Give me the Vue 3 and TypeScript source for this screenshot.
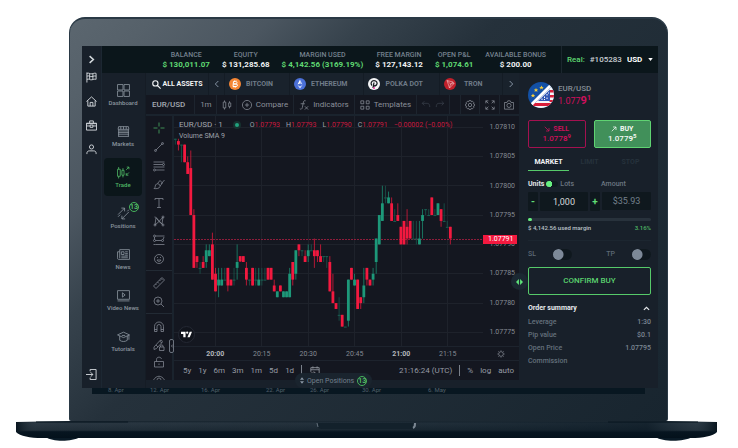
<script setup lang="ts">
import { ref } from 'vue'

interface Stat { label: string; value: string; up?: boolean }
interface Item { label: string; icon: string; badge?: number; active?: boolean }
type Candle = [open: number, high: number, low: number, close: number]

const stats: Stat[] = [
  { label: 'BALANCE', value: '$ 130,011.07', up: true },
  { label: 'EQUITY', value: '$ 131,285.68' },
  { label: 'MARGIN USED', value: '$ 4,142.56 (3169.19%)', up: true },
  { label: 'FREE MARGIN', value: '$ 127,143.12' },
  { label: 'OPEN P&L', value: '$ 1,074.61', up: true },
  { label: 'AVAILABLE BONUS', value: '$ 200.00' },
]

// All rail, navigation and tool glyphs are stroked on a 24 x 24 grid.
const rail: Item[] = [
  { label: 'Markets flag', icon: 'M2 1v22M2 3c4-2 7 2 11 1s6-2 9-1v13c-3-1-5 0-9 1s-7-3-11-1M2 9c4-2 7 2 11 1s6-2 9-1M8 3v13M15 4v12' },
  { label: 'Home', icon: 'M1 12 12 2l11 10M4 10v12h16V10M9 22v-8h6v8' },
  { label: 'Portfolio', icon: 'M1 7h22v15H1zM8 7V2h8v5M1 13h8m6 0h8M9 11h6v5H9zM1 8h22' },
  { label: 'Profile', icon: 'M12 2a4.500 4.500 0 1 0 0 9 4.500 4.500 0 0 0 0-9M2 22v-2c0-3 2-5 5-5h10c3 0 5 2 5 5v2' },
]

const nav: Item[] = [
  { label: 'Dashboard', icon: 'M1 1h10v10H1zM13 1h10v10H13zM1 13h10v10H1zM13 13h10v10H13z' },
  { label: 'Markets', icon: 'M3 3h18l1 5H2zM7 3v5M12 3v5M17 3v5M3 11h18M2 14h20M2 17h20M2 21h20M3 8v13M21 8v13' },
  { label: 'Trade', icon: 'M3 2v4M1 6h5v13H1zM3 19v4M11 4v4M9 8h4v9H9zM11 17v4M17 7l5-5M18 2h4v4M22 12l-5 5M17 13v4h4', active: true },
  { label: 'Positions', icon: 'M2 14 14 2M8 2h6v6M22 9 9 22M9 16v6h6M2 18l4-4M19 8l3-3', badge: 13 },
  { label: 'News', icon: 'M5 3h18v18H3c-2 0-2-1-2-3V7h4M5 3v16M8 7h5v5H8zM15 7h5M15 10h5M15 13h5M8 15h12M8 18h12' },
  { label: 'Video News', icon: 'M1 3h22v16H1zM10 7v8l5-4zM1 22h22' },
  { label: 'Tutorials', icon: 'M1 9l11-5 11 5-11 5zM5 11v8c4 3 10 3 14 0v-8M22 9v9M9 10h6' },
]

const toolGroups: string[][] = [
  [
    'M12 1v8M12 15v8M1 12h8M15 12h8',
    'M5 19 19 5M3 19a2 2 0 1 0 4 0 2 2 0 0 0-4 0M17 5a2 2 0 1 0 4 0 2 2 0 0 0-4 0',
    'M1 4h22M1 9h18M1 14h22M5 20h18M1 20a2 2 0 1 0 4 0 2 2 0 0 0-4 0M19 9a2 2 0 1 0 4 0 2 2 0 0 0-4 0',
    'M2 21c4-2 1-7 5-9 3-2 8 1 7 5s-7 5-12 4M9 11l5-6 5 5-5 6M16 12l7-8',
    'M4 6V3h16v3M12 3v18M8 21h8',
    'M4 20 6 5l12 13L20 4M6 5l6 8 8-9M4 20l8-7 8 7M4 3v2M2 20a2 2 0 1 0 4 0 2 2 0 0 0-4 0M18 20a2 2 0 1 0 4 0 2 2 0 0 0-4 0M18 4a2 2 0 1 0 4 0 2 2 0 0 0-4 0',
    'M5 4h18M5 13h12M5 21h18M1 4a2 2 0 1 0 4 0 2 2 0 0 0-4 0M1 13a2 2 0 1 0 4 0 2 2 0 0 0-4 0M17 13a2 2 0 1 0 4 0 2 2 0 0 0-4 0M3 6v5M1 21h4M20 11l2-5',
    'M3 12a9 9 0 1 0 18 0 9 9 0 0 0-18 0M8 14c2 4 6 4 8 0zM9 8v2M15 8v2',
  ],
  [
    'M1 18 18 1l5 5L6 23zM5 14l2 2M9 10l3 3M13 6l2 2M16 3l3 3',
    'M2 10a8 8 0 1 0 16 0 8 8 0 0 0-16 0M16 16l6 6M10 6v8M6 10h8',
  ],
  [
    'M3 21V11a9 9 0 0 1 18 0v10h-5V11a4 4 0 0 0-8 0v10zM3 17h5M16 17h5',
    'M2 16 14 3c3-2 6 1 4 4L7 19l-5 2zM6 12l4 4M13 4l5 4M13 16h9v7h-9zM15 16v-2c0-3 5-3 5 0v2',
    'M3 11h18v11H3zM7 11V7c0-6 9-6 10-1M12 15v3',
    'M1 12c6-10 16-10 22 0-6 9-16 9-22 0M8 12a4 4 0 1 0 8 0 4 4 0 0 0-8 0',
  ],
]

const prices = ['1.07810', '1.07805', '1.07800', '1.07795', '1.07790', '1.07785', '1.07780', '1.07775']
const times = ['20:00', '20:15', '20:30', '20:45', '21:00', '21:15']
const ranges = ['5y', '1y', '6m', '3m', '1m', '5d', '1d']
const dates = ['8. Apr', '12. Apr', '16. Apr', '22. Apr', '26. Apr', '30. Apr', '6. May']

// Values are hundred-thousandths above or below 1.07800.
const candles: Candle[] = [
  [8, 8, 7, 8], [7.6, 8, 6, 7], [7, 7, 4, 7], [7, 7, 4, 4], [4, 5, 2, 2], [3, 6, -5, -5],
  [-5, -4, -14, -14], [-12, -12, -14, -13], [-14, -13, -15, -14], [-13, -12, -14, -14], [-13, -10, -14, -11], [-12, -10, -12, -11],
  [-10, -8, -16, -16], [-15, -14, -18, -18], [-17, -14, -19, -16], [-17, -14, -17, -16], [-16, -14, -16, -16], [-14, -14, -18, -17],
  [-16, -16, -17, -17], [-16, -14, -17, -16], [-14, -10, -16, -13], [-12, -12, -13, -12.9], [-12, -12, -13, -13], [-14, -13, -17, -16],
  [-16, -16, -17, -16], [-14, -14, -17, -17], [-16, -14, -17, -16], [-17, -14, -17, -16], [-16, -14, -17, -16], [-16, -14, -16, -16],
  [-14, -14, -16, -16], [-14, -14, -16, -16], [-17, -16, -18, -18], [-19, -18, -19, -18], [-17, -17, -18, -18], [-19, -18, -19, -18],
  [-19, -18, -19, -18], [-19, -14, -19, -15], [-13, -13, -17, -16], [-15, -11, -16, -11], [-10, -10, -12, -11], [-11, -11, -12, -11],
  [-12, -11, -13, -13], [-12, -10, -13, -11], [-11, -10, -11, -11], [-11, -9, -14, -12], [-11, -11, -13, -12], [-12, -10, -13, -13],
  [-12, -12, -13, -12], [-12, -12, -14, -12], [-13, -12, -18, -18], [-18, -15, -20, -20], [-20, -20, -21, -21], [-22, -19, -23, -22],
  [-22, -22, -24, -24], [-24, -24, -24, -24], [-23, -16, -24, -16], [-14, -14, -16, -16], [-17, -15, -17, -16], [-16, -16, -21, -21],
  [-19, -19, -21, -20], [-19, -14, -20, -17], [-14, -14, -17, -16], [-16, -16, -17, -17], [-16, -14, -17, -15], [-13, -9, -15, -9],
  [-10, -5, -10, -5], [-6, 0, -6, -3], [-2, 0, -3, -2], [-3, -1, -3, -2], [-3, -2, -6, -6], [-6, -4, -6, -6],
  [-5, -3, -6, -6], [-7, -7, -10, -10], [-6, -6, -10, -10], [-7, -4, -10, -9], [-6, -6, -9, -9], [-9, -6, -9, -9],
  [-9, -6, -10, -9], [-10, -6, -10, -9], [-6, -4, -9, -5], [-4, -4, -5, -4], [-5, -4, -5, -5], [-2, -2, -5, -5],
  [-5, -4, -5, -5], [-5, -3, -5, -3], [-4, -4, -7, -6], [-6, -3, -6, -6], [-7, -6, -7, -7], [-7, -7, -10, -9],
]
const yOf = (v: number): number => 11 + (10 - v) * 5.87
const xOf = (i: number): number => 1.33 + i * 3.09
const kind = (c: Candle): string => (c[3] < c[0] ? 'down' : c[3] > c[0] ? 'up' : 'flat')

const units = ref('1,000')
const amount = ref('$35.93')
const lots = ref(false)
const stopLoss = ref(false)
const takeProfit = ref(false)
const marginPercent = 3.16
const summary = [
  ['Leverage', '1:30'],
  ['Pip value', '$0.1'],
  ['Open Price', '1.07795'],
  ['Commission', ''],
]
</script>

<template>
  <div class="laptop">
    <div class="lid">
      <div class="screen">
        <aside class="rail">
          <button class="rail-toggle" aria-label="Expand">
            <svg class="ico chev" viewBox="0 0 24 24"><path d="M7 3l10 9-10 9" /></svg>
          </button>
          <button v-for="r in rail" :key="r.label" class="rail-btn" :aria-label="r.label">
            <svg class="ico" viewBox="0 0 24 24"><path :d="r.icon" /></svg>
          </button>
          <button class="rail-btn exit" aria-label="Log out">
            <svg class="ico" viewBox="0 0 24 24"><path d="M9 5V1h13v22H9v-4M0 12h15M10 7l5 5-5 5" /></svg>
          </button>
        </aside>

        <div class="main">
          <header class="top">
            <div class="stats">
              <div v-for="s in stats" :key="s.label" class="stat">
                <span class="stat-label">{{ s.label }}</span>
                <span class="stat-value" :class="{ green: s.up }">{{ s.value }}</span>
              </div>
            </div>
            <div class="account">
              <span class="real">Real:</span>
              <label class="acc-id" for="currency">#105283</label>
              <span class="currency">
                <select id="currency"><option>USD</option></select>
                <svg class="caret" viewBox="0 0 6 4"><path d="M0 0h6L3 4z" /></svg>
              </span>
            </div>
          </header>

          <div class="work">
            <nav class="nav">
              <a v-for="n in nav" :key="n.label" href="#" class="nav-item" :class="{ active: n.active }">
                <svg class="ico nav-ico" viewBox="0 0 24 24"><path :d="n.icon" /></svg>
                <span>{{ n.label }}</span>
                <b v-if="n.badge" class="badge nav-badge">{{ n.badge }}</b>
              </a>
            </nav>

            <section class="center">
              <div class="assets">
                <button class="all">
                  <svg class="ico" viewBox="0 0 24 24"><path d="M2 9a7 7 0 1 0 14 0 7 7 0 0 0-14 0M14 14l9 9" /></svg>
                  ALL ASSETS
                </button>
                <button class="arrow" aria-label="Previous"><svg class="ico" viewBox="0 0 24 24"><path d="M16 3 7 12l9 9" /></svg></button>
                <button class="asset">
                  <svg class="coin" viewBox="0 0 24 24"><circle cx="12" cy="12" r="12" fill="#f58634" /><path d="M9 7h4c4 0 4 5 0 5H9m0 0h5c4 0 4 5 0 5H8M9 7 8 17M11 5v2m3-2v2m-4 10v2m3-2v2" fill="none" stroke="#fff" stroke-width="2" /></svg>
                  BITCOIN
                </button>
                <button class="asset">
                  <svg class="coin" viewBox="0 0 24 24"><circle cx="12" cy="12" r="12" fill="#4b70d8" /><path d="M12 3v8l-5 2z" fill="#fff" /><path d="M12 3v8l5 2z" fill="#c4d1f6" /><path d="M7 14l5 3 5-3-5 7z" fill="#e4eafb" /></svg>
                  ETHEREUM
                </button>
                <button class="asset">
                  <svg class="coin" viewBox="0 0 24 24"><circle cx="12" cy="12" r="12" fill="#f4f5f6" /><path d="M8 15c-4-4-1-10 4-10s8 5 5 9c-2 2-4 2-6 2M12 9l-2 11" fill="none" stroke="#15191f" stroke-width="2.500" /><circle cx="12" cy="20" r="2" fill="#e6399b" /></svg>
                  POLKA DOT
                </button>
                <button class="asset last">
                  <svg class="coin" viewBox="0 0 24 24"><circle cx="12" cy="12" r="12" fill="#c1202b" /><path d="M6 5l12 3 2 3-9 9zM6 5l7 7 7-1M13 12l-2 8M13 12l5-4" fill="none" stroke="#f3c5c8" stroke-width="1.200" /></svg>
                  TRON
                </button>
                <button class="arrow next" aria-label="Next"><svg class="ico" viewBox="0 0 24 24"><path d="M8 3l9 9-9 9" /></svg></button>
              </div>

              <div class="toolbar">
                <button class="cell symbol">EUR/USD</button>
                <button class="cell frame">1m</button>
                <button class="cell square" aria-label="Candles"><svg class="ico" viewBox="0 0 24 24"><path d="M6 1v4M3 5h6v14H3zM6 19v4M18 3v4M16 7h5v9h-5zM18 16v4" /></svg></button>
                <button class="cell">
                  <svg class="ico" viewBox="0 0 24 24"><path d="M1 12a11 11 0 1 0 22 0 11 11 0 0 0-22 0M12 7v10M7 12h10" /></svg>Compare
                </button>
                <button class="cell">
                  <svg class="ico" viewBox="0 0 24 24"><path d="M16 2c-4-2-5 1-6 6L8 18c-1 4-3 5-6 3M4 9h10M14 15l8 8M22 15l-8 8" /></svg>Indicators
                </button>
                <button class="cell">
                  <svg class="ico" viewBox="0 0 24 24"><path d="M2 2h7v7H2zM15 2h7v7h-7zM2 15h7v7H2zM15 15h7v7h-7z" /></svg>Templates
                </button>
                <div class="cell history">
                  <button aria-label="Undo"><svg class="ico" viewBox="0 0 24 24"><path d="M8 3 3 8l5 5M3 8h12c4 0 6 3 6 9" /></svg></button>
                  <button aria-label="Redo"><svg class="ico" viewBox="0 0 24 24"><path d="M16 3l5 5-5 5M21 8H9c-4 0-6 3-6 9" /></svg></button>
                </div>
                <span class="cell spacer"></span>
                <button class="cell square" aria-label="Settings"><svg class="ico" viewBox="0 0 24 24"><path d="M10 1h4l1 3 3-1 3 3-1 3 3 1v4l-3 1 1 3-3 3-3-1-1 3h-4l-1-3-3 1-3-3 1-3-3-1v-4l3-1-1-3 3-3 3 1zM8 12a4 4 0 1 0 8 0 4 4 0 0 0-8 0" /></svg></button>
                <button class="cell square" aria-label="Full screen"><svg class="ico" viewBox="0 0 24 24"><path d="M2 8V2h6M2 2l6 6M16 2h6v6M22 2l-6 6M2 16v6h6M2 22l6-6M22 16v6h-6M22 22l-6-6" /></svg></button>
                <button class="cell square" aria-label="Snapshot"><svg class="ico" viewBox="0 0 24 24"><path d="M1 6h6l2-4h6l2 4h6v16H1zM7 13a5 5 0 1 0 10 0 5 5 0 0 0-10 0" /></svg></button>
              </div>

              <div class="chart-row">
                <div class="tools">
                  <div v-for="(g, gi) in toolGroups" :key="gi" class="tool-group">
                    <button v-for="(t, ti) in g" :key="ti" class="tool" :class="{ cross: gi === 0 && ti === 0 }" aria-label="Drawing tool">
                      <svg class="ico" viewBox="0 0 24 24"><path :d="t" /></svg>
                    </button>
                  </div>
                </div>
                <button class="collapse" aria-label="Hide tools"><svg class="ico" viewBox="0 0 24 24"><path d="M16 6l-8 6 8 6" /></svg></button>

                <div class="chart">
                  <div class="plot-row">
                    <div class="plot">
                      <svg class="candles" viewBox="0 0 309 230" preserveAspectRatio="none">
                        <path class="grid" d="M0 11.500H309M0 40.500H309M0 69.500H309M0 99.500H309M0 128.500H309M0 157.500H309M0 187.500H309M0 216.500H309M41.500 0V230M87.500 0V230M134.500 0V230M180.500 0V230M227.500 0V230M273.500 0V230" />
                        <path class="last-price" d="M0 123.500H309" />
                        <g v-for="(c, i) in candles" :key="i" :class="kind(c)">
                          <rect class="wick" :x="xOf(i) - 0.5" :y="yOf(c[1])" width="1" :height="yOf(c[2]) - yOf(c[1])" />
                          <rect class="body" :x="xOf(i) - 1.4" :y="yOf(Math.max(c[0], c[3]))" width="2.8" :height="Math.max(1, Math.abs(c[0] - c[3]) * 5.87)" />
                        </g>
                      </svg>
                      <div class="legend">
                        <div class="legend-top">
                          <span class="pair">EUR/USD · 1</span>
                          <i class="live"></i>
                          <span class="ohlc">O<em>1.07793</em></span>
                          <span class="ohlc">H<em>1.07793</em></span>
                          <span class="ohlc">L<em>1.07790</em></span>
                          <span class="ohlc">C<em>1.07791</em></span>
                          <span class="ohlc"><em>−0.00002 (−0.00%)</em></span>
                        </div>
                        <div class="volume">Volume SMA 9</div>
                      </div>
                      <span class="tv">
                        <svg viewBox="0 0 24 14"><path d="M0 1h10v12H5V6H0zM19 1h5l-5 12h-5zM11 3a2 2 0 1 0 5 0 2 2 0 0 0-5 0" /></svg>
                      </span>
                    </div>
                    <div class="price-axis">
                      <span v-for="p in prices" :key="p">{{ p }}</span>
                      <b class="price-tag">1.07791</b>
                    </div>
                  </div>
                  <div class="time-axis">
                    <div class="time-labels">
                      <span v-for="t in times" :key="t" :class="{ hour: t.endsWith(':00') }">{{ t }}</span>
                    </div>
                    <button class="axis-set" aria-label="Axis settings"><svg class="ico" viewBox="0 0 24 24"><path d="M5 12a7 7 0 1 0 14 0 7 7 0 0 0-14 0M12 1v4M12 19v4M1 12h4M19 12h4M4 4l3 3M17 17l3 3M20 4l-3 3M7 17l-3 3" /></svg></button>
                  </div>
                  <div class="range-bar">
                    <button v-for="r in ranges" :key="r">{{ r }}</button>
                    <i class="bar"></i>
                    <button class="goto" aria-label="Go to date"><svg class="ico" viewBox="0 0 24 24"><path d="M2 14V4h20v17h-7M2 9h20M7 1v5M17 1v5M2 17h10M9 13l4 4-4 4" /></svg></button>
                    <span class="clock">21:16:24 (UTC)</span>
                    <i class="bar"></i>
                    <button>%</button>
                    <button>log</button>
                    <button>auto</button>
                  </div>
                </div>
              </div>
              <button class="open-pos">
                <svg class="updown" viewBox="0 0 6 10"><path d="M3 0l3 4H0zM3 10l3-4H0z" /></svg>
                Open Positions
                <b class="badge">13</b>
              </button>
            </section>

            <section class="order">
              <button class="splitter" aria-label="Resize panel"><svg viewBox="0 0 12 10"><path d="M5 0v10L0 5zM7 0v10l5-5z" /></svg></button>
              <div class="pair-head">
                <svg class="flag" viewBox="0 0 52 52">
                  <defs><clipPath id="disc"><circle cx="26" cy="26" r="26" /></clipPath></defs>
                  <g clip-path="url(#disc)">
                    <path d="M0 0h52v52H0z" fill="#1350a4" />
                    <path d="M52 4V52H4z" fill="#f5f6f8" />
                    <path d="M43 16h9v5h-9zM43 26h9v5h-9zM43 36h9v4h-9zM10 42h42v6H10z" fill="#d81e3a" />
                    <path d="M44 15v23H20z" fill="#3157b5" />
                    <path d="M38 24v3M33 29v3M38 31v3M28 33v3M33 34v2M41 21v2" stroke="#fff" stroke-width="2" />
                    <path d="M-2 50 50-2l4 4L2 54z" fill="#fff" />
                    <path d="M16 12l1.500 3h3l-2.500 2 1 3-3-2-3 2 1-3-2.500-2h3zM27 7l1.500 3h3L29 12l1 3-3-2-3 2 1-3-2.500-2h3zM10 23l1.500 3h3L12 28l1 3-3-2-3 2 1-3-2.500-2h3z" fill="#f6cf3c" />
                  </g>
                </svg>
                <div>
                  <div class="pair-name">EUR/USD</div>
                  <div class="pair-price">1.077<b>9</b><sup>1</sup></div>
                </div>
              </div>
              <div class="sides">
                <button class="side sell">
                  <span><svg class="ico" viewBox="0 0 24 24"><path d="M3 3l17 17M20 8v12H8" /></svg>SELL</span>
                  <span class="quote">1.077<b>8</b><sup>9</sup></span>
                </button>
                <button class="side buy">
                  <span><svg class="ico" viewBox="0 0 24 24"><path d="M3 21 20 4M8 4h12v12" /></svg>BUY</span>
                  <span class="quote">1.077<b>9</b><sup>5</sup></span>
                </button>
              </div>
              <div class="tabs">
                <button class="tab on">MARKET</button>
                <button class="tab">LIMIT</button>
                <button class="tab">STOP</button>
              </div>
              <div class="size-labels">
                <label class="lots"><b>Units</b><input v-model="lots" type="checkbox" class="mini" />Lots</label>
                <label class="amount-label" for="amount">Amount</label>
              </div>
              <div class="size">
                <button class="step" aria-label="Less">-</button>
                <input v-model="units" class="field units" type="text" aria-label="Units" />
                <button class="step" aria-label="More">+</button>
                <input id="amount" v-model="amount" class="field amount" type="text" />
              </div>
              <div class="meter"><i :style="{ width: marginPercent + '%' }"></i></div>
              <div class="margin-text"><span>$ 4,142.56 used margin</span><span class="pct">{{ marginPercent }}%</span></div>
              <div class="limits">
                <label>SL<input v-model="stopLoss" type="checkbox" class="switch" /></label>
                <label>TP<input v-model="takeProfit" type="checkbox" class="switch" /></label>
              </div>
              <button class="confirm">CONFIRM BUY</button>
              <button class="sum-head">Order summary<svg class="ico" viewBox="0 0 24 24"><path d="M3 17l9-9 9 9" /></svg></button>
              <dl class="summary">
                <div v-for="row in summary" :key="row[0]"><dt>{{ row[0] }}</dt><dd>{{ row[1] }}</dd></div>
              </dl>
            </section>
          </div>
        </div>
      </div>
      <div class="strip"><span v-for="d in dates" :key="d">{{ d }}</span></div>
    </div>
    <svg class="base" viewBox="0 0 701 22" preserveAspectRatio="none">
      <defs>
        <linearGradient id="deck" x1="0" y1="0" x2="0" y2="1">
          <stop offset="0" stop-color="#17242e" />
          <stop offset="0.15" stop-color="#26333e" />
          <stop offset="0.5" stop-color="#1b2832" />
          <stop offset="0.65" stop-color="#071520" />
          <stop offset="1" stop-color="#04111b" />
        </linearGradient>
        <linearGradient id="shade" x1="0" y1="0" x2="1" y2="0">
          <stop offset="0" stop-color="#06131c" stop-opacity="0.9" />
          <stop offset="0.03" stop-color="#3a4650" stop-opacity="0.25" />
          <stop offset="0.5" stop-color="#14232e" stop-opacity="0.2" />
          <stop offset="0.9" stop-color="#0a1924" stop-opacity="0.6" />
          <stop offset="0.97" stop-color="#33424d" stop-opacity="0.4" />
          <stop offset="1" stop-color="#06131c" stop-opacity="0.9" />
        </linearGradient>
      </defs>
      <path d="M30 16C36 21 56 21 64 16zM640 16c6 5 28 5 36 0z" fill="#0a1a26" />
      <path d="M0 1 52 0h597l52 1v10c-4 4-14 6-26 6H26C14 17 4 15 0 11z" fill="url(#deck)" />
      <path d="M0 1h701v9H0z" fill="url(#shade)" />
      <path d="M20 1h92M592 1h90" stroke="#081620" stroke-width="1" />
      <path d="M301 2h98c0 5-2 6-6 6h-86c-4 0-6-1-6-6z" fill="#13212b" />
      <path d="M301 2l1 4" fill="none" stroke="#66727e" stroke-width="1" />
      <path d="M399 2c0 3 0 4-2 5" fill="none" stroke="#7b8792" stroke-width="2" />
    </svg>
  </div>
</template>

<style>
body { margin: 0; background: #fff; }
</style>

<style scoped>
.laptop, .laptop * { box-sizing: border-box; }
.laptop { padding: 17px 0 0; font-family: Roboto, "Liberation Sans", sans-serif; font-size: 7px; line-height: 10px; color: #8b95a1; }
button, input, select { font: inherit; color: inherit; background: none; border: 0; margin: 0; padding: 0; }
button { display: flex; align-items: center; justify-content: center; white-space: nowrap; }
a { color: inherit; text-decoration: none; }
.ico { display: block; flex: none; width: 10px; height: 10px; fill: none; stroke: currentColor; stroke-width: 2; }
.lid {
  margin: 0 70px 0 69px; padding: 28px 9px 27px 12px; border: 1px solid #2a3945; border-top-width: 2px; border-bottom: 0;
  border-radius: 16px 16px 2px 2px;
  background: linear-gradient(135deg, #5b666f 0, #56616a 8%, #4b5660 20%, #36424c 30%, #25313b 43%, #18252f 100%);
}
.screen { display: flex; margin-top: -1px; background: #18202a; }
.rail { width: 20px; display: flex; flex-direction: column; align-items: center; border-right: 1px solid #1c2732; color: #d5dade; padding-bottom: 2px; }
.rail-toggle { height: 19px; padding-top: 7px; }
.rail-btn { height: 24px; }
.rail-btn .ico { width: 11px; height: 11px; }
.rail-toggle .ico { stroke-width: 4; width: 9px; height: 9px; }
.exit { margin-top: auto; }
.main { flex: 1; min-width: 0; }
.top { display: flex; height: 27px; background: #0b161b; }
.stats { flex: 1; display: flex; justify-content: flex-end; gap: 12px; padding: 4px 15px 0 0; }
.stat { display: flex; flex-direction: column; align-items: center; white-space: nowrap; }
.stat-label { font-weight: 500; color: #75818e; }
.stat-value { font-size: 8px; font-weight: 700; color: #f0f2f4; }
.stat-value.green, .real { color: #5fd872; }
.account { width: 97px; display: flex; align-items: center; gap: 5px; padding-left: 5px; border-left: 1px solid #1b262e; font-size: 8px; font-weight: 500; color: #c9ced3; }
.currency { display: flex; align-items: center; gap: 5px; }
.currency select { appearance: none; font-weight: 700; color: #fff; }
.caret { width: 5px; height: 3px; fill: #fff; }
.work { display: flex; height: 315px; }
.nav { width: 44px; padding: 3px 3px 0 2px; display: flex; flex-direction: column; gap: 3px; border-right: 1px solid #151c25; }
.nav-item { position: relative; height: 38px; flex: none; display: flex; flex-direction: column; align-items: center; justify-content: center; gap: 2px; border-radius: 4px; font-size: 6px; font-weight: 500; line-height: 8px; white-space: nowrap; color: #8b959f; }
.nav-ico { width: 13px; height: 13px; stroke-width: 1.5; }
.nav-item.active { background: #0b161a; color: #4fb765; }
.badge { display: flex; align-items: center; justify-content: center; width: 10px; height: 10px; border: 1px solid #46b35c; border-radius: 50%; font-size: 7px; font-weight: 500; color: #57c96b; }
.nav-badge { position: absolute; right: 3px; top: 3px; }
.center { position: relative; flex: 1; min-width: 0; }
.assets { display: flex; height: 22px; font-weight: 700; color: #6f7b88; background: #19222c; }
.assets button { border-right: 1px solid #141c25; }
.assets .all { width: 63px; gap: 2px; color: #f2f4f6; }
.all .ico { width: 9px; height: 9px; stroke-width: 3; }
.assets .arrow { width: 16px; color: #8492a3; }
.arrow .ico { width: 8px; height: 8px; stroke-width: 3; }
.assets .asset { gap: 5px; padding: 0 16px 0 4px; }
.assets .last { flex: 1; gap: 8px; justify-content: flex-start; }
.assets .next { border-right: 0; }
.coin { width: 12px; height: 12px; flex: none; }
.toolbar { display: flex; height: 19px; background: #141720; font-size: 8px; color: #8a8f99; }
.cell { display: flex; align-items: center; gap: 4px; padding: 0 5px; border-right: 1px solid #1d242e; }
.cell .ico { stroke-width: 1.8; }
.symbol { width: 51px; padding: 0 0 0 6px; justify-content: flex-start; font-weight: 500; font-size: 8px; color: #a5aab2; }
.frame { width: 22px; justify-content: center; }
.square { width: 20px; padding: 0; justify-content: center; }
.history { padding: 0 4px; color: #3a404b; }
.spacer { flex: 1; }
.square:last-child { border-right: 0; }
.chart-row { position: relative; display: flex; gap: 2px; padding-top: 2px; background: #1a232d; }
.tools { width: 26px; height: 264px; overflow: hidden; background: #141720; padding-top: 3px; color: #868b95; }
.tool-group { display: grid; grid-auto-rows: 1fr; justify-items: center; border-bottom: 1px solid #222a34; }
.tool-group:nth-child(1) { height: 152px; padding-bottom: 2px; }
.tool-group:nth-child(2) { height: 43px; padding: 3px 0 2px; }
.tool-group:nth-child(3) { height: 76px; padding-top: 4px; }
.tool .ico { width: 12px; height: 12px; stroke-width: 1.5; }
.cross { color: #4fb765; }
.collapse { position: absolute; left: 23px; top: 225px; width: 5px; height: 14px; border: 1px solid #6c737e; border-radius: 2px; background: #141720; color: #9aa0a8; }
.collapse .ico { width: 4px; height: 4px; stroke-width: 4; }
.chart { flex: 1; min-width: 0; background: #141720; }
.plot-row { display: flex; height: 230px; }
.plot { position: relative; flex: 1; min-width: 0; }
.candles { display: block; width: 100%; height: 100%; }
.grid { stroke: #1e222b; fill: none; }
.last-price { stroke: #8d1d3b; stroke-dasharray: 2 1; fill: none; }
.up { fill: #1d9879; }
.flat { fill: #1a5f52; }
.down { fill: #f3193f; }
.wick { opacity: 0.7; }
.legend { position: absolute; left: 5px; top: 3px; }
.legend-top { display: flex; align-items: center; gap: 6px; height: 12px; white-space: nowrap; }
.pair { font-size: 8px; color: #a4a8b0; }
.live { width: 8px; height: 8px; margin: 0 3px 0 4px; border: 2px solid #17322f; border-radius: 50%; background: #22a37f; }
.ohlc { color: #9da1a9; }
.ohlc em { font-style: normal; color: #c8193f; }
.volume { color: #9da1a9; }
.tv { position: absolute; left: 4px; bottom: 3px; width: 17px; height: 17px; display: flex; align-items: center; justify-content: center; border: 1px solid #242833; border-radius: 50%; background: #11141c; }
.tv svg { width: 11px; height: 7px; fill: #fff; }
.price-axis { position: relative; width: 36px; padding: 6px 4px 9px 0; display: flex; flex-direction: column; justify-content: space-between; align-items: flex-end; color: #858a93; }
.price-tag { position: absolute; left: 0; top: 119px; width: 34px; height: 9px; line-height: 9px; padding-left: 5px; font-weight: 400; color: #fff; background: #f3193f; }
.time-axis { display: flex; height: 15px; border-top: 1px solid #1d232d; border-bottom: 1px solid #1d232d; color: #858a93; }
.time-labels { flex: 1; display: flex; align-items: center; padding: 0 12px 0 18px; }
.time-labels span { flex: 1; text-align: center; }
.time-labels .hour { font-weight: 700; color: #b3b7bd; }
.axis-set { width: 36px; }
.axis-set .ico { width: 8px; height: 8px; }
.range-bar { display: flex; align-items: center; gap: 7px; height: 19px; padding: 0 5px 0 9px; font-size: 8px; color: #969ba4; }
.bar { width: 1px; height: 11px; background: #7a808a; }
.goto { margin-left: 1px; }
.clock { margin-left: auto; }
.open-pos { position: absolute; left: 149px; bottom: 0; height: 15px; padding: 0 5px; gap: 3px; border-radius: 8px; background: #1a242e; color: #74808d; }
.updown { width: 4px; height: 7px; fill: #8b97a5; }
.order { position: relative; width: 139px; padding: 9px 7px 0 9px; display: flex; flex-direction: column; background: #18202a; }
.splitter { position: absolute; left: -8px; top: 200px; width: 17px; height: 17px; border-radius: 50%; background: #1b2832; }
.splitter svg { width: 7px; height: 6px; fill: #5fe47a; }
.pair-head { display: flex; gap: 4px; height: 38px; }
.flag { width: 26px; height: 26px; }
.pair-name { margin-top: 2px; font-size: 8px; font-weight: 500; color: #868e97; }
.pair-price { font-size: 9px; line-height: 14px; color: #d10f5d; }
.pair-price b { font-size: 11px; }
sup { font-size: 7px; line-height: 1px; font-weight: 700; vertical-align: 4px; }
.sides { display: grid; grid-template-columns: 1fr 1fr; gap: 8px; }
.side { height: 28px; flex-direction: column; border: 1px solid #a41150; border-radius: 2px; font-weight: 700; }
.side span { display: flex; align-items: center; gap: 3px; }
.side .ico { width: 6px; height: 6px; stroke-width: 3; }
.side .quote { display: block; font-size: 8px; font-weight: 500; }
.side sup { font-size: 6px; vertical-align: 3px; }
.sell { color: #cb1059; }
.buy { border: 1px solid #5fd372; background: #41905a; color: #f4f8f5; }
.tabs { display: grid; grid-template-columns: 1fr 1fr 1fr; margin-top: 6px; }
.tab { height: 17px; font-weight: 700; color: #26323c; border-bottom: 1px solid transparent; }
.tab.on { color: #f2f4f6; border-color: #56ca6a; }
.size-labels { display: flex; margin-top: 8px; font-weight: 500; color: #6b7681; }
.lots { width: 73px; display: flex; align-items: center; gap: 2px; }
.lots b { font-weight: 700; color: #e1e4e8; }
.mini { appearance: none; width: 12px; height: 6px; border-radius: 3px; background: radial-gradient(circle at 3px 3px, #67ef80 3px, #101a20 3px); }
.size { display: flex; gap: 2px; margin-top: 3px; height: 19px; }
.step { width: 10px; background: #0f181e; border-radius: 1px; font-size: 10px; font-weight: 700; color: #5fdc74; }
.field { min-width: 0; text-align: center; background: #0f181e; border-radius: 1px; font-size: 9px; }
.units { flex: 1; color: #d4d8dc; }
.amount { width: 49px; height: 18px; color: #74808c; }
.meter { display: flex; margin-top: 7px; height: 3px; border-radius: 2px; background: #28323c; }
.meter i { min-width: 4px; border-radius: 2px; background: #67ef80; }
.margin-text { display: flex; justify-content: space-between; margin-top: 2px; font-size: 6px; font-weight: 500; color: #bcc2c8; }
.pct { color: #4fb765; }
.limits { display: flex; justify-content: space-between; align-items: center; margin-top: 7px; border-top: 1px solid #1c2630; height: 27px; color: #5c6874; font-weight: 500; }
.limits label { display: flex; align-items: center; gap: 17px; }
.switch { appearance: none; width: 19px; height: 11px; border-radius: 6px; background: radial-gradient(circle at 5px 50%, #7d8998 5px, #0f181e 6px); }
.confirm { flex: none; height: 28px; border: 1px solid #56ca6a; border-radius: 2px; font-size: 8px; font-weight: 500; color: #5bd26f; }
.sum-head { justify-content: space-between; margin-top: 8px; padding-right: 1px; font-weight: 700; color: #e6e9ec; }
.sum-head .ico { width: 7px; height: 7px; stroke-width: 4; }
.summary { margin: 3px 0 0; color: #64707c; font-weight: 500; }
.summary div { display: flex; justify-content: space-between; line-height: 13px; }
.summary dd { margin: 0; color: #7b8692; }
.strip { display: grid; grid-template-columns: 42px 51px 65px 44px 52px 66px 1fr; height: 6px; margin: 0 13px 0 10px; padding-left: 16px; overflow: hidden; background: #081721; font-size: 6px; line-height: 3px; color: #53606b; }
.base { display: block; width: calc(100% - 37px); height: 22px; margin-left: 16px; }
</style>
